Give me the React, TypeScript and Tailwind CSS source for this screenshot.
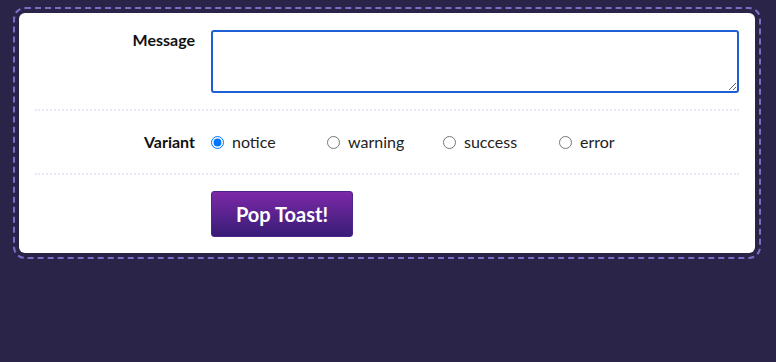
import { useState } from "react";

const variants = ["notice", "warning", "success", "error"];

export default function App() {
  const [variant, setVariant] = useState("notice");
  const [message, setMessage] = useState("");

  return (
    <div
      className="w-[776px] h-[362px] bg-[#2a2448] pt-[13px] pl-[19px]"
      style={{ fontFamily: "Lato, 'Noto Sans', sans-serif" }}
    >
      <div className="w-[736px] bg-white rounded-[6px] outline-2 outline-dashed outline-offset-[4px] outline-[#7b6cc4] px-4 h-[240px] flex flex-col">
        <div className="flex gap-4 pt-[17px] pb-4">
          <label className="w-[160px] shrink-0 text-right text-[16px] font-bold text-[#111] leading-5">
            Message
          </label>
          <textarea
            value={message}
            onChange={(e) => setMessage(e.target.value)}
            className="flex-1 h-[63px] border-2 border-[#1f5fd4] rounded-[3px] outline-none px-2 py-1 text-[15px]"
          />
        </div>
        <div className="border-t-2 border-dotted border-[#e9e8f3]" />
        <div className="flex gap-4 items-center h-[62px]">
          <span className="w-[160px] shrink-0 text-right text-[16px] font-bold text-[#111]">Variant</span>
          <div className="flex">
            {variants.map((v) => (
              <label key={v} className="w-[116px] flex items-center gap-[8px] text-[16px] text-[#222] cursor-pointer">
                <input
                  type="radio"
                  name="variant"
                  checked={variant === v}
                  onChange={() => setVariant(v)}
                  className="m-0 w-[13px] h-[13px]"
                />
                {v}
              </label>
            ))}
          </div>
        </div>
        <div className="border-t-2 border-dotted border-[#e9e8f3]" />
        <div className="flex pt-[16px] pl-[176px]">
          <button className="w-[142px] h-[46px] rounded-[3px] bg-gradient-to-b from-[#7d28a8] to-[#381c76] border border-[#4a2488] text-white text-[20px] font-bold">
            Pop Toast!
          </button>
        </div>
      </div>
    </div>
  );
}
